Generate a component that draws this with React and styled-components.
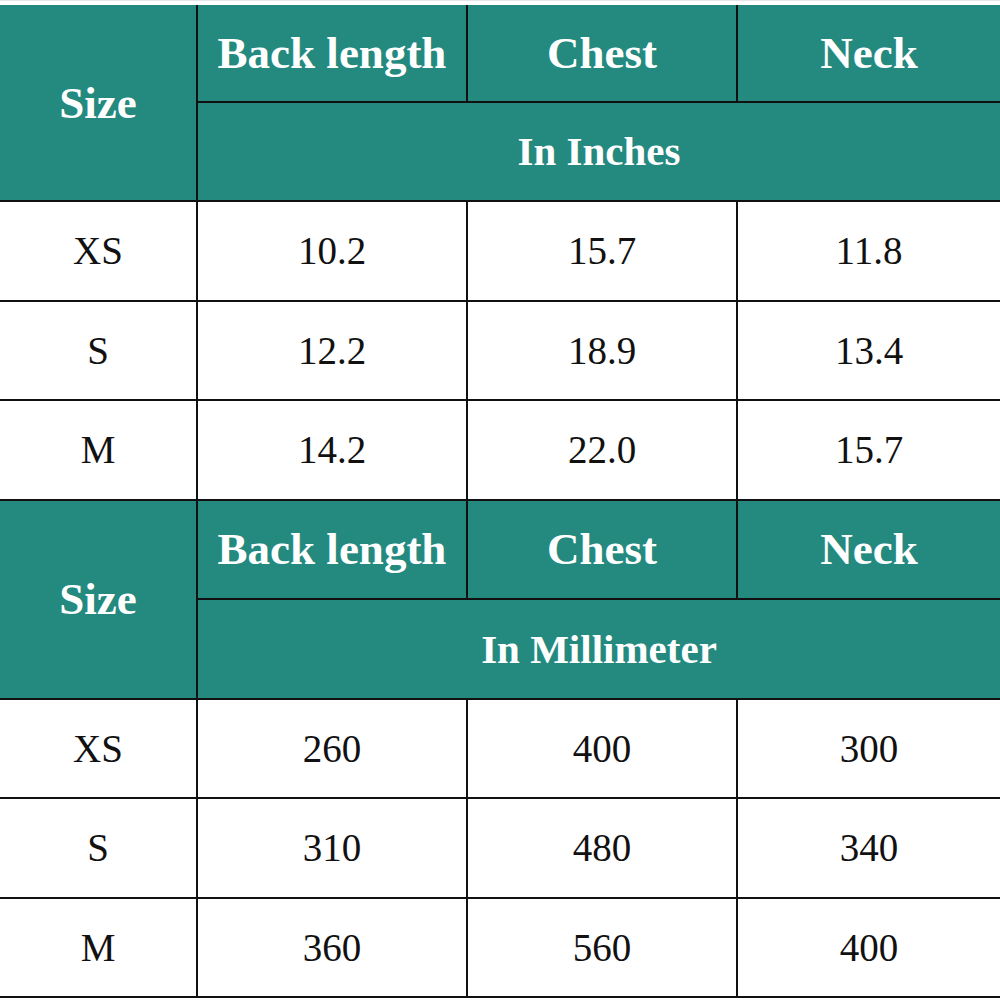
import React from 'react'
import styled, { createGlobalStyle } from 'styled-components'

const GlobalStyle = createGlobalStyle`
    body {
        margin: 0;
        background: #fff;
        font-family: "Liberation Serif", "Times New Roman", serif;
    }
`

const Page = styled.div`
    width: 1000px;
    padding-top: 4px;
    border-top: 1px solid #e4e8e8;
    box-sizing: border-box;
`

const Table = styled.table`
    width: 1000px;
    border-collapse: collapse;
    table-layout: fixed;
`

const Row = styled.tr`
    height: ${p => p.$h || 99.5}px;
`

const Head = styled.td`
    background: #248a80;
    color: #fff;
    font-weight: bold;
    font-size: ${p => p.$size || 45}px;
    text-align: center;
    vertical-align: middle;
    padding: 0;
    border: 2px solid #111;
    border-top: ${p => (p.$first ? 'none' : '2px solid #111')};
    &:first-child { border-left: none; }
    &:last-child { border-right: none; }
`

const Cell = styled.td`
    color: #111;
    font-size: 39px;
    text-align: center;
    vertical-align: middle;
    padding: 0;
    border: 2px solid #111;
    &:first-child { border-left: none; }
    &:last-child { border-right: none; }
`

const sections = [
    {
        unit: 'In Inches',
        rows: [
            ['XS', '10.2', '15.7', '11.8'],
            ['S', '12.2', '18.9', '13.4'],
            ['M', '14.2', '22.0', '15.7'],
        ],
    },
    {
        unit: 'In Millimeter',
        rows: [
            ['XS', '260', '400', '300'],
            ['S', '310', '480', '340'],
            ['M', '360', '560', '400'],
        ],
    },
]

const App = () => {
    return (
        <Page>
            <GlobalStyle />
            <Table>
                <colgroup>
                    <col style={{ width: 197 }} />
                    <col style={{ width: 270 }} />
                    <col style={{ width: 270 }} />
                    <col style={{ width: 263 }} />
                </colgroup>
                <tbody>
                    {sections.map((sec, i) => (
                        <React.Fragment key={sec.unit}>
                            <Row $h={i === 0 ? 96.5 : 99.5}>
                                <Head rowSpan={2} $first={i === 0}>Size</Head>
                                <Head $first={i === 0}>Back length</Head>
                                <Head $first={i === 0}>Chest</Head>
                                <Head $first={i === 0}>Neck</Head>
                            </Row>
                            <Row>
                                <Head colSpan={3} $size={41}>{sec.unit}</Head>
                            </Row>
                            {sec.rows.map(r => (
                                <Row key={r[0]}>
                                    {r.map((v, j) => (
                                        <Cell key={j}>{v}</Cell>
                                    ))}
                                </Row>
                            ))}
                        </React.Fragment>
                    ))}
                </tbody>
            </Table>
        </Page>
    )
}

export default App
